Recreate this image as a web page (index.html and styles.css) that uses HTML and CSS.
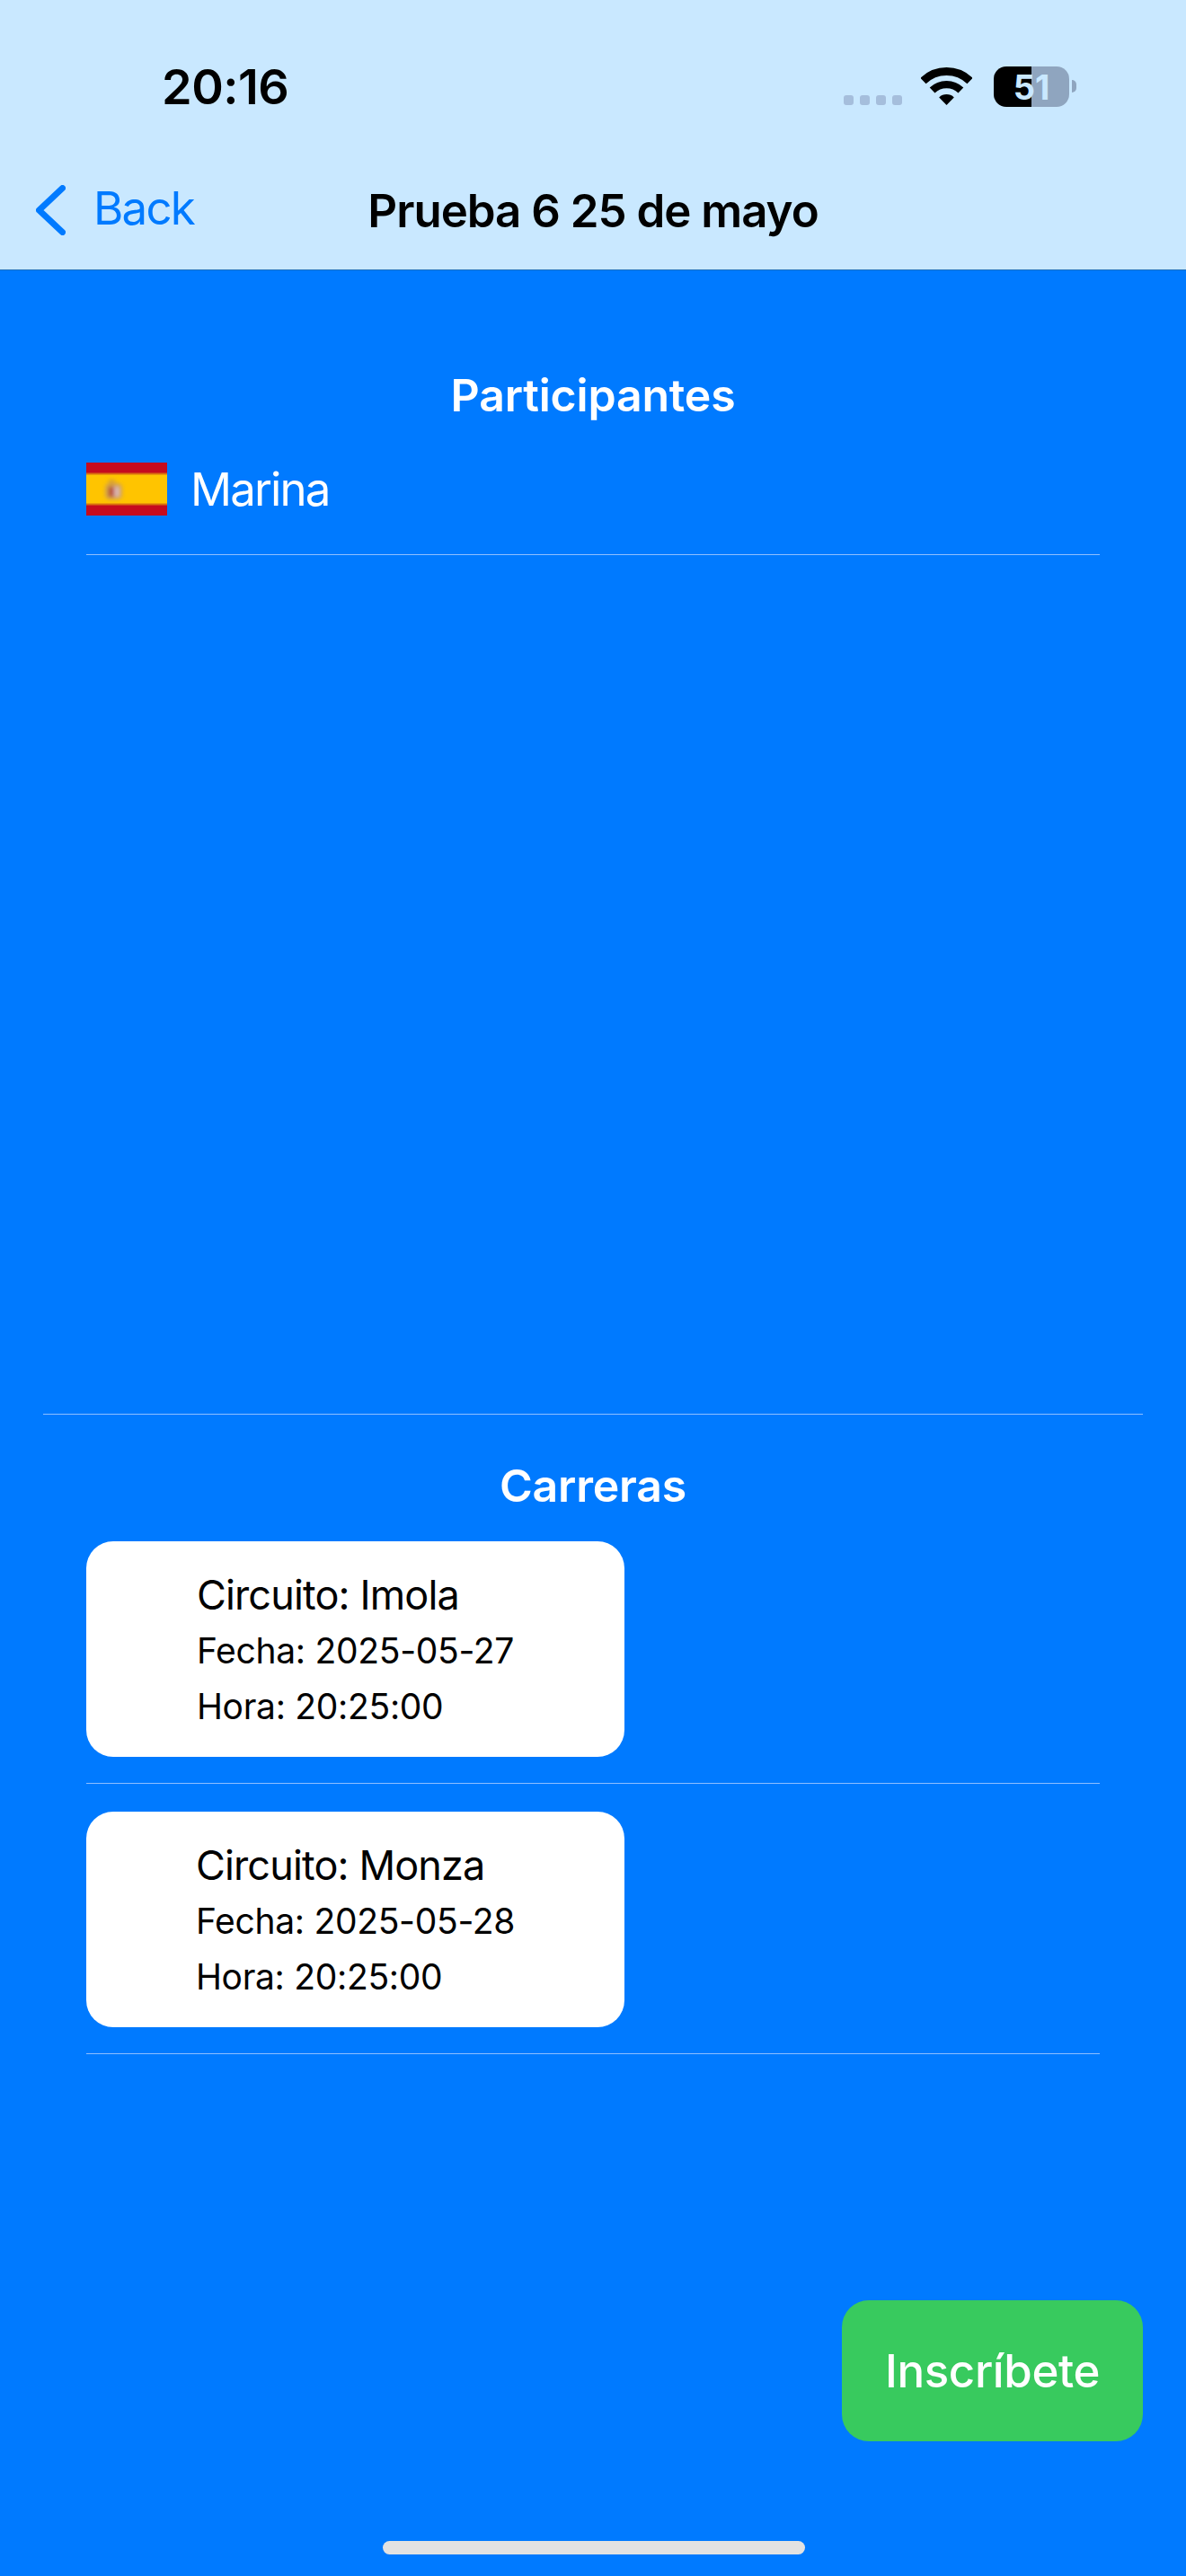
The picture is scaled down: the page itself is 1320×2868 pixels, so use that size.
FILE: index.html
```html
<!DOCTYPE html>
<html lang="es">
<head>
    <meta charset="UTF-8">
    <meta name="viewport" content="width=device-width, initial-scale=1.0">
    <title>Prueba 6 25 de mayo</title>
    <link rel="stylesheet" href="styles.css">
</head>
<body>

    <header>
        <div class="status-bar">
            <span class="time">20:16</span>
            <div class="status-icons">
                <div class="signal">
                    <span></span><span></span><span></span><span></span>
                </div>
                <svg class="wifi" width="57" height="42" viewBox="0 0 57 42">
                    <path d="M2.45 15.03A37.5 37.5 0 0 1 54.55 15.03" fill="none" stroke="#000" stroke-width="9"/>
                    <path d="M12.6 25.6A22.85 22.85 0 0 1 44.4 25.6" fill="none" stroke="#000" stroke-width="8.3"/>
                    <path d="M28.5 42L20.2 33.4A12 12 0 0 1 36.8 33.4Z" fill="#000"/>
                </svg>
                <div class="battery">51</div>
                <div class="battery-cap"></div>
            </div>
        </div>
        <nav>
            <a class="back" href="#">
                <svg width="33" height="56" viewBox="0 0 33 56">
                    <polyline points="29.5,3.5 3.5,28 29.5,52.5" fill="none" stroke="#007aff" stroke-width="7" stroke-linecap="round" stroke-linejoin="round"/>
                </svg>
                <span>Back</span>
            </a>
            <h1>Prueba 6 25 de mayo</h1>
        </nav>
    </header>

    <main>
        <section class="participants">
            <h2>Participantes</h2>
            <div class="participant">
                <svg class="flag" width="90" height="59" viewBox="0 0 90 59">
                    <defs>
                        <filter id="soft" x="-30%" y="-30%" width="160%" height="160%"><feGaussianBlur stdDeviation="2"/></filter>
                    </defs>
                    <rect width="90" height="59" fill="#c60b1e"/>
                    <rect y="12" width="90" height="35" fill="#ffc400"/>
                    <rect y="11.5" width="90" height="2" fill="#d9700f"/>
                    <rect y="45.5" width="90" height="2" fill="#d9700f"/>
                    <g filter="url(#soft)">
                        <rect x="21" y="23" width="19" height="18" rx="5" fill="#d0a050"/>
                        <rect x="25" y="19" width="7" height="6" fill="#d8a030"/>
                        <rect x="25" y="27" width="6" height="11" fill="#b84a36"/>
                        <rect x="31" y="27" width="6" height="11" fill="#dcb8b0"/>
                    </g>
                </svg>
                <span>Marina</span>
            </div>
        </section>

        <section class="races">
            <h2>Carreras</h2>
            <div class="race-row">
                <div class="race-card">
                    <div class="race-info">
                        <h3>Circuito: Imola</h3>
                        <p>Fecha: 2025-05-27</p>
                        <p>Hora: 20:25:00</p>
                    </div>
                </div>
            </div>
            <div class="race-row">
                <div class="race-card">
                    <div class="race-info">
                        <h3>Circuito: Monza</h3>
                        <p>Fecha: 2025-05-28</p>
                        <p>Hora: 20:25:00</p>
                    </div>
                </div>
            </div>
        </section>

        <div class="actions">
            <button class="signup">Inscríbete</button>
        </div>
    </main>

    <div class="home-indicator"></div>

</body>
</html>
```

FILE: styles.css
```css
* {
    box-sizing: border-box;
}

html, body {
    height: 100%;
}

body {
    font-family: Inter, "Liberation Sans", sans-serif;
    background-color: #007aff;
    color: #000;
    margin: 0;
    display: flex;
    flex-direction: column;
    overflow: hidden;
}

h1, h2, h3, p {
    margin: 0;
    font-weight: normal;
}

/* Header */
header {
    background-color: #c9e8ff;
    height: 301px;
    border-bottom: 1px solid #1f6fb8;
    flex-shrink: 0;
}

.status-bar {
    height: 174px;
    display: flex;
    justify-content: space-between;
    padding: 70px 0 0 180px;
}

.time {
    font-size: 54px;
    font-weight: 600;
    line-height: 54px;
    letter-spacing: -0.5px;
}

.status-icons {
    display: flex;
    align-items: flex-start;
    padding-right: 122px;
    padding-top: 4px;
    height: 60px;
}

.signal {
    display: flex;
    gap: 7px;
    margin-top: 32px;
    margin-right: 21px;
}

.signal span {
    width: 11px;
    height: 11px;
    border-radius: 3px;
    background-color: #a5bedc;
}

.wifi {
    margin-top: 1px;
    margin-right: 24px;
}

.battery {
    width: 84px;
    height: 45px;
    border-radius: 14px;
    background: linear-gradient(to right, #000 50%, #8fa5bf 50%);
    color: #c9e8ff;
    font-size: 38px;
    font-weight: 700;
    line-height: 47px;
    text-align: center;
}

.battery-cap {
    width: 5px;
    height: 14px;
    margin: 15px 0 0 3px;
    border-radius: 0 5px 5px 0;
    background-color: #8fa5bf;
}

nav {
    position: relative;
    height: 120px;
    display: flex;
    align-items: center;
    justify-content: center;
}

.back {
    position: absolute;
    left: 40px;
    top: 32px;
    display: flex;
    align-items: center;
    gap: 31px;
    color: #007aff;
    text-decoration: none;
    font-size: 51px;
    letter-spacing: -1.8px;
}

.back svg {
    display: block;
}

.back span {
    margin-top: -5px;
}

nav h1 {
    font-size: 51px;
    font-weight: 600;
    letter-spacing: -1px;
}

/* Main */
main {
    flex: 1;
    padding: 0 48px;
    display: flex;
    flex-direction: column;
}

h2 {
    font-size: 50px;
    font-weight: 600;
    line-height: 60px;
    letter-spacing: -0.2px;
    color: #fff;
    text-align: center;
}

.participants {
    height: 1274px;
    padding-top: 109px;
    border-bottom: 1px solid #8ebfff;
}

.participant {
    margin: 2px 48px 0;
    height: 146px;
    display: flex;
    align-items: center;
    gap: 26px;
    color: #fff;
    font-size: 51px;
    letter-spacing: -1.9px;
    border-bottom: 1px solid #8ebfff;
}

.flag {
    display: block;
    flex-shrink: 0;
}

.races {
    padding: 49px 48px 0;
    flex: 1;
}

.races h2 {
    margin-bottom: 32px;
}

.race-row {
    padding-bottom: 29px;
    margin-bottom: 31px;
    border-bottom: 1px solid #8ebfff;
}

.race-card {
    width: 599px;
    height: 240px;
    background-color: #fff;
    border-radius: 30px;
    display: flex;
    justify-content: center;
    padding-top: 28px;
}

.race-info h3 {
    font-size: 45px;
    line-height: 63px;
    letter-spacing: -0.85px;
}

.race-info p {
    font-size: 39px;
    line-height: 62px;
    letter-spacing: -0.3px;
}

.actions {
    display: flex;
    justify-content: flex-end;
    padding-bottom: 150px;
}

.signup {
    width: 335px;
    height: 157px;
    border: none;
    border-radius: 30px;
    background-color: #38ca5e;
    color: #fff;
    font-family: inherit;
    font-size: 51px;
    font-weight: 500;
    letter-spacing: -0.4px;
}

.home-indicator {
    position: absolute;
    left: 426px;
    top: 2829px;
    width: 470px;
    height: 15px;
    border-radius: 8px;
    background-color: #e2e2e2;
}
```
